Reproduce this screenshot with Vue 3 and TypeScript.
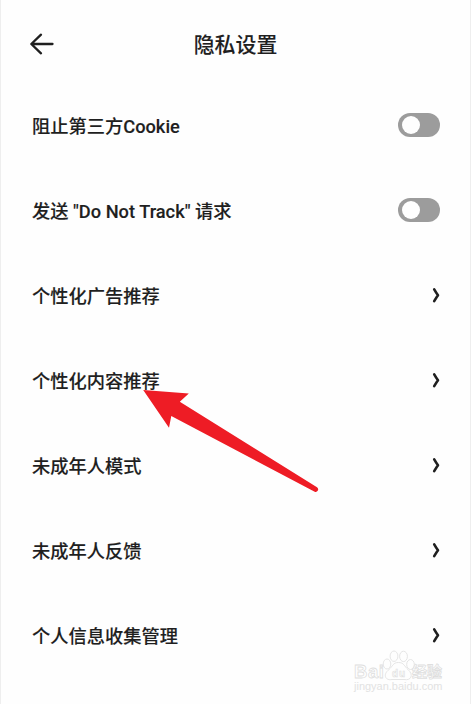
<script setup lang="ts">
import { ref } from 'vue'

interface Setting {
  label: string
  toggle?: boolean
}

const settings: Setting[] = [
  { label: '阻止第三方Cookie', toggle: true },
  { label: '发送 "Do Not Track" 请求', toggle: true },
  { label: '个性化广告推荐' },
  { label: '个性化内容推荐' },
  { label: '未成年人模式' },
  { label: '未成年人反馈' },
  { label: '个人信息收集管理' },
]

const enabled = ref<Record<string, boolean>>({})

function flip(item: Setting) {
  if (item.toggle) enabled.value[item.label] = !enabled.value[item.label]
}
</script>

<template>
  <main class="page">
    <header class="header">
      <svg class="back" viewBox="0 0 26 24" width="26" height="24">
        <path d="M12 2.7 2.3 12 12 21.3M2.5 12H23.5" />
      </svg>
      <h1 class="title">隐私设置</h1>
    </header>

    <ul class="list">
      <li v-for="item in settings" :key="item.label" class="row" @click="flip(item)">
        <span class="label">{{ item.label }}</span>
        <span v-if="item.toggle" class="switch" :class="{ on: enabled[item.label] }">
          <span class="knob"></span>
        </span>
        <svg v-else class="chevron" viewBox="0 0 10 18" width="10" height="18">
          <path d="M4.2 3.4Q6.4 7.2 8 9.3Q6.4 11.4 4.2 15.2" />
        </svg>
      </li>
    </ul>

    <svg class="pointer" viewBox="0 0 180 106" width="180" height="106">
      <path d="M3.2 5 48.8 8.4 39.8 16.8 177 102.2A2.6 2.6 0 0 1 174.7 106.8L31.3 31 29 42.8Z" />
    </svg>

    <svg class="watermark" viewBox="0 0 94 48" width="94" height="48">
      <g class="paw">
        <ellipse cx="36" cy="20" rx="3.8" ry="5" />
        <ellipse cx="43" cy="12.2" rx="3.9" ry="5.2" />
        <ellipse cx="52.5" cy="12.4" rx="3.9" ry="5.2" />
        <ellipse cx="59.5" cy="20.5" rx="3.8" ry="5" />
        <path d="M47.5 18.5C42 18.5 42 22 38 25.5C31 31 35 37 41 35.5H53C60 37 63 31 57 25.5C53 22 53 18.5 47.5 18.5Z" />
      </g>
      <text class="brand" x="3" y="34" textLength="30">Bai</text>
      <text class="du" x="41" y="32.5" textLength="13">du</text>
      <text class="brand-cn" x="61" y="32.5" textLength="30">经验</text>
      <text class="site" x="3" y="45.5" textLength="88.5" lengthAdjust="spacingAndGlyphs">jingyan.baidu.com</text>
    </svg>
  </main>
</template>

<style>
body {
  margin: 0;
  background: #fefefe;
}
</style>

<style scoped>
.page {
  position: relative;
  box-sizing: border-box;
  width: 100%;
  height: 704px;
  overflow: hidden;
  border-left: 1px solid #eee;
  border-right: 1px solid #eee;
  background: #fefefe;
  color: #1f1f1f;
  font-family: Roboto, "Noto Sans CJK SC", sans-serif;
}

.header {
  display: grid;
  grid-template-columns: 26px 1fr 26px;
  align-items: center;
  height: 83px;
  box-sizing: border-box;
  padding: 5px 28px 0;
}

.back path {
  fill: none;
  stroke: #1f1f1f;
  stroke-width: 2.3;
  stroke-linecap: round;
  stroke-linejoin: round;
}

.title {
  margin: 0;
  padding-top: 1px;
  font-size: 20.9px;
  font-weight: 500;
  line-height: 30px;
  text-align: center;
  -webkit-text-stroke: 0.1px #1f1f1f;
}

.list {
  margin: 0;
  padding: 0;
  list-style: none;
}

.row {
  display: flex;
  align-items: center;
  justify-content: space-between;
  height: 85px;
  padding: 0 30px 0 31px;
}

.label {
  padding-top: 2px;
  font-size: 18.25px;
  font-weight: 500;
  line-height: 26px;
  white-space: pre;
  -webkit-text-stroke: 0.12px #1f1f1f;
}

.switch {
  box-sizing: border-box;
  width: 42px;
  height: 24px;
  margin-bottom: 1px;
  padding: 3px 4px;
  border-radius: 12px;
  background: #9c9c9c;
}

.switch.on {
  display: flex;
  justify-content: flex-end;
  background: #3478f6;
}

.knob {
  display: block;
  width: 18px;
  height: 18px;
  border-radius: 50%;
  background: #fefefe;
}

.chevron {
  margin-bottom: 1px;
}

.chevron path {
  fill: none;
  stroke: #1f1f1f;
  stroke-width: 2.6;
  stroke-linecap: round;
  stroke-linejoin: round;
}

.pointer {
  position: absolute;
  left: 139px;
  top: 385px;
  overflow: visible;
  fill: #ee1c25;
  pointer-events: none;
}

.watermark {
  position: absolute;
  left: 350px;
  top: 644px;
  pointer-events: none;
}

.watermark text,
.paw {
  fill: #fefefe;
  stroke: #dedede;
  stroke-width: 0.8;
}

.watermark .brand {
  font: 700 18.5px "Liberation Sans", sans-serif;
}

.watermark .du {
  font: 700 10px "Liberation Sans", sans-serif;
  stroke-width: 0.6;
}

.watermark .brand-cn {
  font: 700 15px "Liberation Sans", "Noto Sans CJK SC", sans-serif;
}

.watermark .site {
  font: 400 10px "Liberation Sans", sans-serif;
  fill: #e2e2e2;
  stroke: none;
}
</style>
